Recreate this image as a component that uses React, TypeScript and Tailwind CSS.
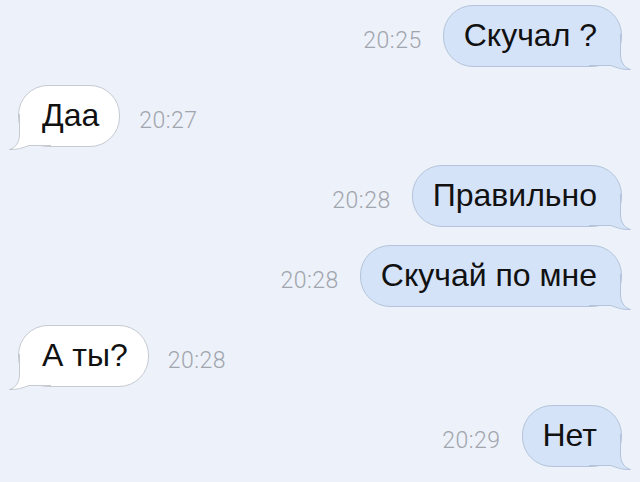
import React from 'react';

type Message = {
  text: string;
  time: string;
  mine: boolean;
};

const messages: Message[] = [
  { text: 'Скучал ?', time: '20:25', mine: true },
  { text: 'Даа', time: '20:27', mine: false },
  { text: 'Правильно', time: '20:28', mine: true },
  { text: 'Скучай по мне', time: '20:28', mine: true },
  { text: 'А ты?', time: '20:28', mine: false },
  { text: 'Нет', time: '20:29', mine: true },
];

// bottom corner + tail, drawn for the right side and mirrored for the left
const Tail: React.FC<{ fill: string; stroke: string; mine: boolean }> = ({ fill, stroke, mine }) => (
  <svg
    width="44"
    height="38"
    viewBox="0 0 44 38"
    className={mine ? 'absolute right-[-12px] bottom-[-6px]' : 'absolute left-[-12px] bottom-[-6px] -scale-x-100'}
  >
    <path
      d="M31.5 0 L31.5 20 C31.5 28 35 33.5 41.5 35.5 C35 36 28 34 22 31.5 L0 31.5 L0 0 Z"
      fill={fill}
    />
    <path
      d="M31.5 0 L31.5 20 C31.5 28 35 33.5 41.5 35.5 C35 36 28 34 22 31.5 L0 31.5"
      fill="none"
      stroke={stroke}
      strokeWidth="1"
    />
  </svg>
);

const Bubble: React.FC<{ text: string; mine: boolean }> = ({ text, mine }) => {
  const fill = mine ? '#d5e3f8' : '#ffffff';
  const stroke = mine ? '#b4c4da' : '#c6cad2';
  return (
    <div
      className={
        mine
          ? 'relative h-[62px] flex items-center pl-[20px] pr-[24px] rounded-[30px] border border-[#b4c4da] bg-[#d5e3f8]'
          : 'relative h-[62px] flex items-center pl-[23px] pr-[20px] rounded-[30px] border border-[#c6cad2] bg-white'
      }
    >
      <Tail fill={fill} stroke={stroke} mine={mine} />
      <span className="relative text-[32px] leading-none text-[#111111] font-['Liberation_Sans',Arial,sans-serif] pb-[2px]">
        {text}
      </span>
    </div>
  );
};

const Time: React.FC<{ time: string }> = ({ time }) => (
  <span className="pt-[8px] text-[23px] leading-none tracking-[0.5px] font-light text-[#a1a5ad] font-['Roboto','Liberation_Sans',sans-serif]">
    {time}
  </span>
);

export default function App() {
  return (
    <div className="w-[640px] h-[482px] bg-[#edf1f9] overflow-hidden pt-[5px] flex flex-col gap-[18px]">
      {messages.map((m, i) =>
        m.mine ? (
          <div key={i} className="flex items-center justify-end gap-[21px] pr-[18px]">
            <Time time={m.time} />
            <Bubble text={m.text} mine />
          </div>
        ) : (
          <div key={i} className="flex items-center gap-[19px] pl-[18px]">
            <Bubble text={m.text} mine={false} />
            <Time time={m.time} />
          </div>
        )
      )}
    </div>
  );
}
